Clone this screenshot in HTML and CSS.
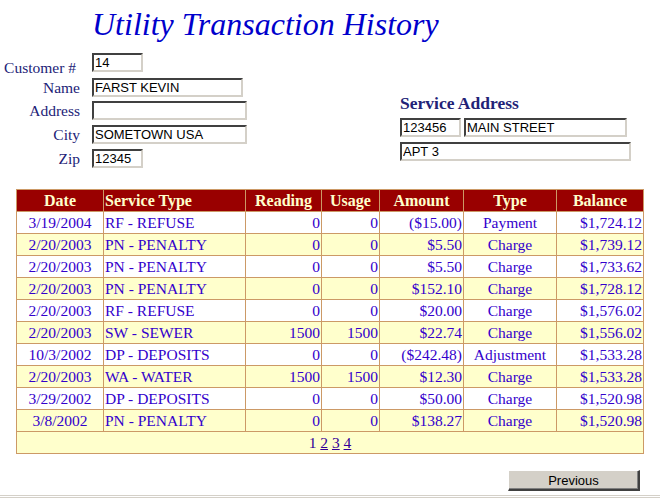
FILE: index.html
```html
<!DOCTYPE html>
<html>
<head>
<meta charset="utf-8">
<title>Utility Transaction History</title>
<link rel="stylesheet" href="styles.css">
</head>
<body>
<div class="page">
  <h1 class="title">Utility Transaction History</h1>
  <div class="top">
    <div class="cust">
      <label class="lbl lbl-first">Customer #</label>
      <input class="fld w50" type="text" value="14">
      <label class="lbl">Name</label>
      <input class="fld w150" type="text" value="FARST KEVIN">
      <label class="lbl">Address</label>
      <input class="fld w154" type="text" value="">
      <label class="lbl">City</label>
      <input class="fld w154" type="text" value="SOMETOWN USA">
      <label class="lbl">Zip</label>
      <input class="fld w50" type="text" value="12345">
    </div>
    <div class="svc">
      <h2 class="svc-head">Service Address</h2>
      <div class="svc-row">
        <input class="fld w60" type="text" value="123456">
        <input class="fld w162" type="text" value="MAIN STREET">
      </div>
      <div class="svc-row">
        <input class="fld w230" type="text" value="APT 3">
      </div>
    </div>
  </div>

  <table class="hist">
    <colgroup>
      <col class="c-date"><col class="c-svc"><col class="c-read"><col class="c-use"><col class="c-amt"><col class="c-type"><col class="c-bal">
    </colgroup>
    <thead>
      <tr>
        <th>Date</th><th class="left">Service Type</th><th>Reading</th><th>Usage</th><th>Amount</th><th>Type</th><th>Balance</th>
      </tr>
    </thead>
    <tbody>
      <tr><td class="ctr">3/19/2004</td><td>RF - REFUSE</td><td class="num">0</td><td class="num">0</td><td class="num">($15.00)</td><td class="ctr">Payment</td><td class="num">$1,724.12</td></tr>
      <tr class="alt"><td class="ctr">2/20/2003</td><td>PN - PENALTY</td><td class="num">0</td><td class="num">0</td><td class="num">$5.50</td><td class="ctr">Charge</td><td class="num">$1,739.12</td></tr>
      <tr><td class="ctr">2/20/2003</td><td>PN - PENALTY</td><td class="num">0</td><td class="num">0</td><td class="num">$5.50</td><td class="ctr">Charge</td><td class="num">$1,733.62</td></tr>
      <tr class="alt"><td class="ctr">2/20/2003</td><td>PN - PENALTY</td><td class="num">0</td><td class="num">0</td><td class="num">$152.10</td><td class="ctr">Charge</td><td class="num">$1,728.12</td></tr>
      <tr><td class="ctr">2/20/2003</td><td>RF - REFUSE</td><td class="num">0</td><td class="num">0</td><td class="num">$20.00</td><td class="ctr">Charge</td><td class="num">$1,576.02</td></tr>
      <tr class="alt"><td class="ctr">2/20/2003</td><td>SW - SEWER</td><td class="num">1500</td><td class="num">1500</td><td class="num">$22.74</td><td class="ctr">Charge</td><td class="num">$1,556.02</td></tr>
      <tr><td class="ctr">10/3/2002</td><td>DP - DEPOSITS</td><td class="num">0</td><td class="num">0</td><td class="num">($242.48)</td><td class="ctr">Adjustment</td><td class="num">$1,533.28</td></tr>
      <tr class="alt"><td class="ctr">2/20/2003</td><td>WA - WATER</td><td class="num">1500</td><td class="num">1500</td><td class="num">$12.30</td><td class="ctr">Charge</td><td class="num">$1,533.28</td></tr>
      <tr><td class="ctr">3/29/2002</td><td>DP - DEPOSITS</td><td class="num">0</td><td class="num">0</td><td class="num">$50.00</td><td class="ctr">Charge</td><td class="num">$1,520.98</td></tr>
      <tr class="alt"><td class="ctr">3/8/2002</td><td>PN - PENALTY</td><td class="num">0</td><td class="num">0</td><td class="num">$138.27</td><td class="ctr">Charge</td><td class="num">$1,520.98</td></tr>
    </tbody>
    <tfoot>
      <tr class="alt"><td colspan="7" class="pager">1 <a href="#">2</a> <a href="#">3</a> <a href="#">4</a></td></tr>
    </tfoot>
  </table>

  <div class="actions">
    <button class="btn" type="button">Previous</button>
  </div>
  <div class="rule"></div>
</div>
</body>
</html>
```
FILE: styles.css
```css
html, body {
  margin: 0;
  padding: 0;
  background: #ffffff;
}
body {
  font-family: "Liberation Serif", "Times New Roman", serif;
  font-size: 15px;
}
.page {
  width: 660px;
  height: 498px;
  overflow: hidden;
}
.title {
  margin: 0 0 0 92px;
  height: 53px;
  line-height: 48px;
  font-size: 32px;
  font-weight: normal;
  font-style: italic;
  color: #0000cc;
  white-space: nowrap;
}
.top {
  display: flex;
  align-items: flex-start;
}
.cust {
  width: 400px;
  display: grid;
  grid-template-columns: 80px auto;
  column-gap: 12px;
  grid-template-rows: 25px 23px 24px 24px 19px;
  align-items: start;
  justify-items: start;
}
.lbl {
  justify-self: end;
  color: #222277;
  font-size: 15.5px;
  line-height: 19px;
  white-space: nowrap;
}
.lbl-first {
  margin-top: 5px;
  margin-right: 4px;
}
.fld {
  box-sizing: border-box;
  height: 19px;
  margin: 0;
  padding: 0 1px;
  font-family: "Liberation Sans", Arial, sans-serif;
  font-size: 13px;
  line-height: 15px;
  color: #000000;
  background: #ffffff;
  border-style: solid;
  border-width: 2px;
  border-color: #404040 #d4d0c8 #d4d0c8 #404040;
  outline: none;
}
.w50 { width: 51px; }
.w60 { width: 61px; }
.w150 { width: 151px; }
.w154 { width: 155px; }
.w162 { width: 163px; }
.w230 { width: 231px; }

.svc {
  margin-top: 40px;
}
.svc-head {
  margin: 0;
  font-size: 17.5px;
  line-height: 20px;
  font-weight: bold;
  color: #222277;
  white-space: nowrap;
}
.svc-row {
  display: flex;
  gap: 3px;
  margin-top: 5px;
}
.svc-row + .svc-row {
  margin-top: 5px;
}

.hist {
  margin: 21px 0 0 16px;
  width: 627px;
  border-collapse: collapse;
  table-layout: fixed;
  border: 1px solid #cc9966;
}
.c-date { width: 87px; }
.c-svc { width: 142px; }
.c-read { width: 76px; }
.c-use { width: 58px; }
.c-amt { width: 84px; }
.c-type { width: 93px; }
.c-bal { width: 87px; }
.hist th,
.hist td {
  border: 1px solid #cc9966;
  height: 21px;
  padding: 0 1px;
  line-height: 20px;
  font-size: 15.5px;
  white-space: nowrap;
  overflow: hidden;
}
.hist th {
  background: #990000;
  color: #ffffcc;
  font-weight: bold;
  font-size: 16px;
  text-align: center;
}
.hist th.left {
  text-align: left;
}
.hist td {
  color: #3300cc;
  text-align: left;
  background: #ffffff;
}
.hist tr.alt td {
  background: #ffffcc;
}
.hist td.num {
  text-align: right;
}
.hist td.ctr {
  text-align: center;
}
.hist td.pager {
  text-align: center;
  color: #330099;
}
.pager a {
  color: #330099;
  text-decoration: underline;
}

.actions {
  display: flex;
  justify-content: flex-end;
  padding-right: 20px;
  margin-top: 16px;
  height: 25px;
}
.btn {
  box-sizing: border-box;
  width: 132px;
  height: 21px;
  margin: 0;
  padding: 0;
  font-family: "Liberation Sans", Arial, sans-serif;
  font-size: 13px;
  color: #000000;
  background: #d4d0c8;
  border-style: solid;
  border-width: 1px 2px 2px 1px;
  border-color: #ffffff #404040 #404040 #ffffff;
  box-shadow: inset -1px -1px 0 #808080;
}
.rule {
  height: 1px;
  border-top: 1px solid #d4d0c8;
  border-bottom: 2px solid #d4d0c8;
}
```
